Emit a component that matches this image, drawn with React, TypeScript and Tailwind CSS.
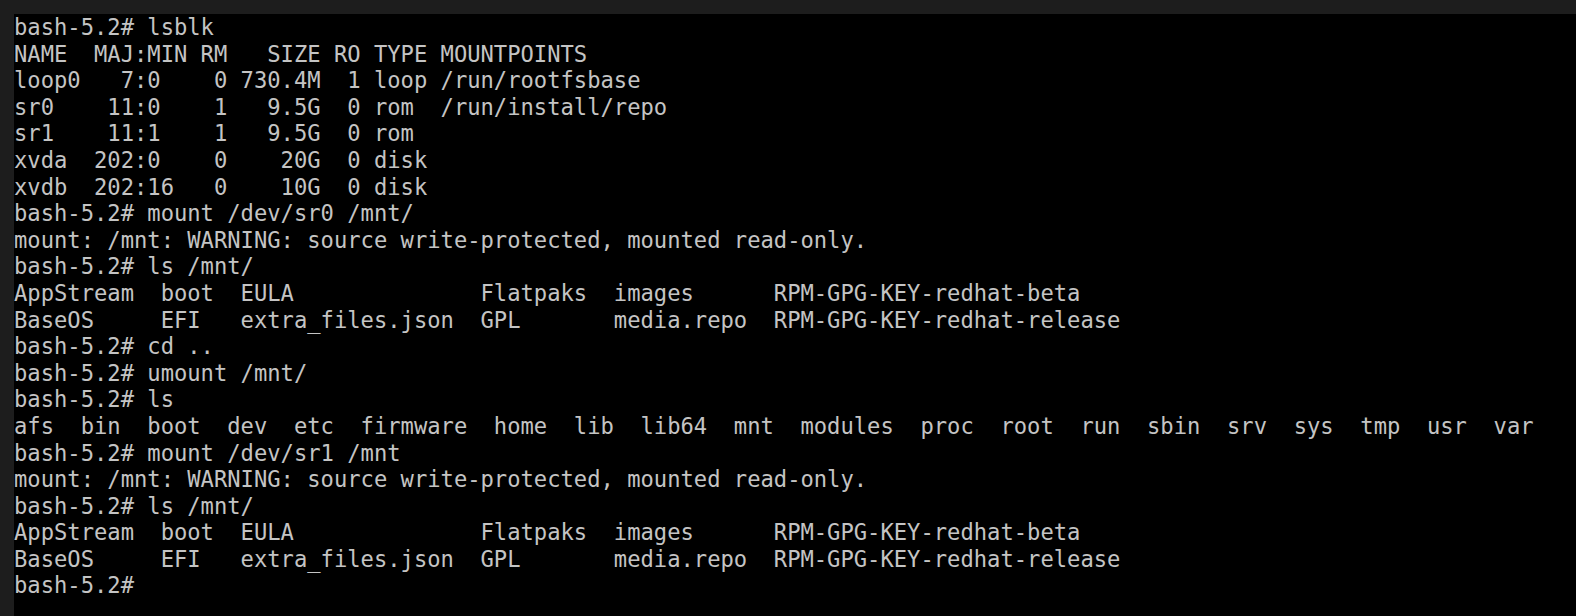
import React from "react";

const lsMnt = [
  "AppStream  boot  EULA              Flatpaks  images      RPM-GPG-KEY-redhat-beta",
  "BaseOS     EFI   extra_files.json  GPL       media.repo  RPM-GPG-KEY-redhat-release",
];

const lines: string[] = [
  "bash-5.2# lsblk",
  "NAME  MAJ:MIN RM   SIZE RO TYPE MOUNTPOINTS",
  "loop0   7:0    0 730.4M  1 loop /run/rootfsbase",
  "sr0    11:0    1   9.5G  0 rom  /run/install/repo",
  "sr1    11:1    1   9.5G  0 rom",
  "xvda  202:0    0    20G  0 disk",
  "xvdb  202:16   0    10G  0 disk",
  "bash-5.2# mount /dev/sr0 /mnt/",
  "mount: /mnt: WARNING: source write-protected, mounted read-only.",
  "bash-5.2# ls /mnt/",
  ...lsMnt,
  "bash-5.2# cd ..",
  "bash-5.2# umount /mnt/",
  "bash-5.2# ls",
  "afs  bin  boot  dev  etc  firmware  home  lib  lib64  mnt  modules  proc  root  run  sbin  srv  sys  tmp  usr  var",
  "bash-5.2# mount /dev/sr1 /mnt",
  "mount: /mnt: WARNING: source write-protected, mounted read-only.",
  "bash-5.2# ls /mnt/",
  ...lsMnt,
  "bash-5.2#",
];

export default function App() {
  return (
    <div className="w-full h-[616px] bg-[#1d1d1d] pt-[14px] pl-[14px] flex flex-col overflow-hidden">
      <div className="flex-1 bg-black overflow-hidden">
        <div
          className="text-[#c4c4c4] text-[22.15px] leading-[26.6px] font-normal whitespace-pre"
          style={{ fontFamily: '"DejaVu Sans Mono", "Liberation Mono", monospace' }}
        >
          {lines.map((l, i) => (
            <div key={i} className="h-[26.6px]">
              {l}
            </div>
          ))}
        </div>
      </div>
    </div>
  );
}
